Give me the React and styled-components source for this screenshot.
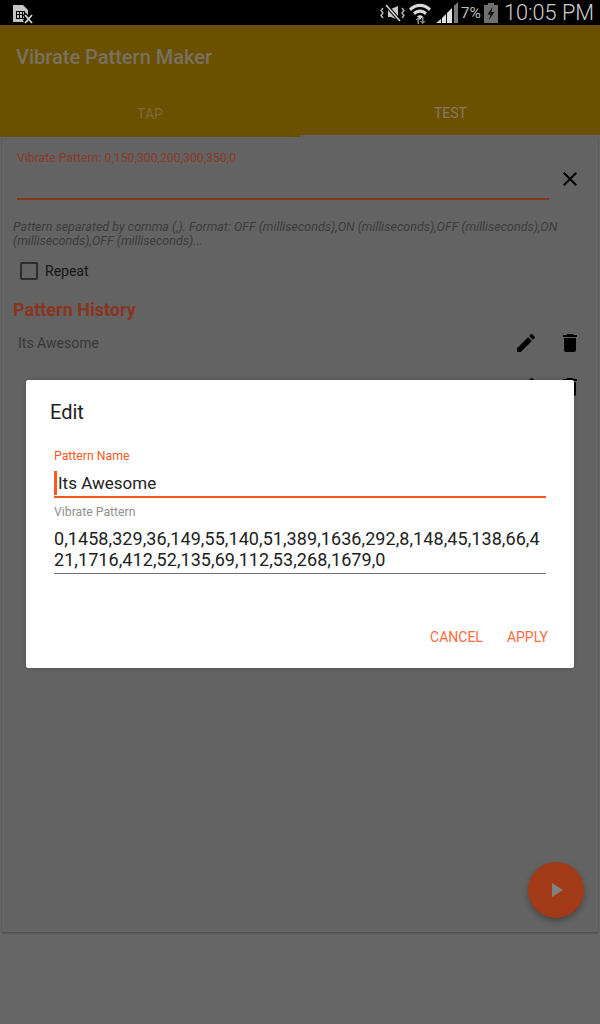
import React from "react";
import styled, { createGlobalStyle } from "styled-components";
import { MdEdit, MdDelete, MdClose, MdPlayArrow } from "react-icons/md";

const Global = createGlobalStyle`
  html, body { margin: 0; padding: 0; background: #666; }
  * { box-sizing: border-box; }
  body { font-family: Roboto, "Liberation Sans", sans-serif; }
`;

const Page = styled.div`
  position: relative;
  width: 600px;
  height: 1024px;
  overflow: hidden;
  display: flex;
  flex-direction: column;
  background: #666666;
`;

const StatusBar = styled.div`
  height: 25px;
  flex: none;
  background: #000;
  display: flex;
  align-items: center;
  color: #c4c4c4;
  padding: 0 6px 0 13px;
`;
const StatusLeft = styled.div`
  flex: 1;
  display: flex;
  align-items: center;
`;
const Percent = styled.span`
  font-size: 15.5px;
  margin: 0 3px 0 3px;
  color: #bdbdbd;
`;
const Clock = styled.span`
  font-size: 21.7px;
  font-weight: 300;
  margin-left: 6px;
  color: #cfcfcf;
  white-space: nowrap;
`;
const StatusIcon = styled.svg`
  display: block;
  flex: none;
  margin-right: ${(p) => p.$gap || 0}px;
`;

const AppBar = styled.header`
  height: 112px;
  flex: none;
  background: #6b5000;
  display: flex;
  flex-direction: column;
`;
const Title = styled.div`
  height: 64px;
  padding: 0 16px;
  display: flex;
  align-items: center;
  font-size: 20px;
  font-weight: 500;
  color: #78715f;
`;
const Tabs = styled.div`
  height: 48px;
  display: flex;
`;
const Tab = styled.div`
  flex: 1;
  display: flex;
  align-items: center;
  justify-content: center;
  font-size: 14px;
  color: ${(p) => (p.$active ? "#7d6a3a" : "#857c62")};
  height: ${(p) => (p.$active ? 48 : 46)}px;
  padding-top: 2px;
  padding-left: ${(p) => (p.$active ? 0 : 1)}px;
  background: #6b5000;
`;
const TabSlot = styled.div`
  flex: 1;
  display: flex;
  background: #646464;
  align-items: flex-start;
`;

const Card = styled.main`
  position: relative;
  margin: 0 2px;
  height: 795px;
  flex: none;
  background: #636363;
  box-shadow: 0 1px 2px rgba(0, 0, 0, 0.3);
  padding: 14px 11px 0;
  display: flex;
  flex-direction: column;
`;
const PatternLabel = styled.div`
  font-size: 12.25px;
  line-height: 14px;
  color: #8a3a28;
  margin-left: 4px;
`;
const InputRow = styled.div`
  display: flex;
  align-items: flex-start;
  height: 41px;
  margin: 0 0 0 4px;
`;
const PatternInput = styled.div`
  flex: none;
  width: 532px;
  height: 35px;
  border-bottom: 2px solid #86341a;
`;
const IconBtn = styled.span`
  width: 44px;
  height: 24px;
  display: flex;
  align-items: center;
  justify-content: center;
  color: #000;
  font-size: 24px;
  flex: none;
`;
const CloseBtn = styled(IconBtn)`
  width: 42px;
  margin-top: 2px;
`;
const Hint = styled.div`
  margin: 0 -8px 0 0;
  padding-top: 14px;
  font-size: 12.5px;
  line-height: 14px;
  font-style: italic;
  color: #3c3c3c;
`;
const RepeatRow = styled.label`
  display: flex;
  align-items: center;
  margin: 13px 0 0 7px;
  height: 20px;
  font-size: 14px;
  color: #141414;
`;
const Check = styled.span`
  width: 18px;
  height: 18px;
  border: 2px solid #2c2c2c;
  border-radius: 2px;
  margin-right: 7px;
  flex: none;
`;
const Heading = styled.h2`
  margin: 18px 0 0;
  font-size: 18px;
  line-height: 22px;
  font-weight: 700;
  color: #8a3420;
`;
const HistoryList = styled.div`
  display: flex;
  flex-direction: column;
`;
const HistoryRow = styled.div`
  height: 44px;
  display: flex;
  align-items: center;
  padding-left: 5px;
  font-size: 14px;
  color: #383838;
`;
const RowName = styled.span`
  flex: 1;
`;
const RowEnd = styled.div`
  display: flex;
  margin-right: -5px;
`;

const Fab = styled.div`
  position: absolute;
  left: 526px;
  top: 725px;
  width: 56px;
  height: 56px;
  border-radius: 50%;
  background: #a23a17;
  box-shadow: 0 3px 6px rgba(0, 0, 0, 0.3);
  color: #80807e;
  display: flex;
  align-items: center;
  justify-content: center;
  font-size: 24px;
`;

const Dialog = styled.section`
  position: absolute;
  left: 26px;
  top: 380px;
  width: 548px;
  height: 288px;
  background: #fff;
  border-radius: 2px;
  box-shadow: 0 0 4px rgba(0, 0, 0, 0.2);
  display: flex;
  flex-direction: column;
  padding: 20px 28px 0;
`;
const DialogTitle = styled.div`
  font-size: 20px;
  line-height: 24px;
  margin-left: -4px;
  color: #212121;
`;
const FieldLabel = styled.div`
  font-size: 12.25px;
  line-height: 14px;
  color: ${(p) => (p.$focus ? "#ff5722" : "#8f8f8f")};
  margin-top: ${(p) => p.$top}px;
`;
const FieldValue = styled.div`
  font-size: ${(p) => p.$size}px;
  line-height: 21px;
  letter-spacing: ${(p) => p.$spacing || 0}px;
  color: #212121;
  word-break: break-all;
  border-bottom: ${(p) => (p.$focus ? "2px solid #ff5722" : "1px solid #757575")};
  padding-top: ${(p) => p.$padTop}px;
  padding-bottom: ${(p) => p.$padBottom}px;
`;
const Caret = styled.span`
  display: inline-block;
  width: 3px;
  height: 24px;
  background: #ff5722;
  vertical-align: -6px;
  margin-right: 1px;
`;
const Actions = styled.div`
  display: flex;
  justify-content: flex-end;
  gap: 24px;
  margin: 55px -2px 0 0;
`;
const Action = styled.span`
  font-size: 14px;
  line-height: 16px;
  color: #ff6a3d;
`;

const SimIcon = () => (
  <StatusIcon width="21" height="20" viewBox="0 0 21 20" style={{ marginTop: 3 }}>
    <path d="M0 1h10l5 5v12H0z" fill="#c4c4c4" />
    <path d="M3 7h9v8H3z" fill="#000" />
    <path d="M4 8h2v2H4zM7 8h2v2H7zM10 8h1v6h-1zM4 11h2v3H4zM7 11h2v3H7z" fill="#c4c4c4" />
    <path d="M11 10l8 8M19 10l-8 8" stroke="#000" strokeWidth="4" />
    <path d="M12 11l7 8M19 11l-7 8" stroke="#d4d4d4" strokeWidth="1.8" />
  </StatusIcon>
);
const MuteIcon = () => (
  <StatusIcon $gap={4} width="25" height="20" viewBox="0 0 25 20">
    <path d="M8 6h3l7 -3v14l-7 -3H8z" fill="#c9c9c9" />
    <path d="M6 2l14 16" stroke="#000" strokeWidth="3.5" />
    <path d="M6 2l14 16" stroke="#d0d0d0" strokeWidth="1.6" />
    <path d="M3 5l-2 2.5 2 2.5-2 2.5 2 2.5M22 5l2 2.5-2 2.5 2 2.5-2 2.5" fill="none" stroke="#b5b5b5" strokeWidth="1.4" />
  </StatusIcon>
);
const WifiIcon = () => (
  <StatusIcon $gap={5} width="22" height="22" viewBox="0 0 22 22">
    <path d="M0 6.5C6 0 16 0 22 6.5L20 9C15 3.5 7 3.5 2 9z" fill="#d8d8d8" />
    <path d="M4 10.5C8 6.5 14 6.5 18 10.5L16 13C13 10 9 10 6 13z" fill="#d8d8d8" />
    <path d="M8 14.5c2-1.7 4-1.7 6 0l-3 3z" fill="#d8d8d8" />
    <path d="M8.5 22v-4H6.5l2.8-3 2.6 3H10v4z" fill="#8a8a8a" />
    <path d="M13 15v4h-2l2.8 3 2.7-3h-2v-4z" fill="#8a8a8a" />
  </StatusIcon>
);
const SignalIcon = () => (
  <StatusIcon width="22" height="21" viewBox="0 0 22 21">
    <path d="M0 21l5-4v4z" fill="#d8d8d8" />
    <path d="M6 16l4-4v9H6z" fill="#e0e0e0" />
    <path d="M11 11l5-5v15h-5z" fill="#e0e0e0" />
    <path d="M18 4l4-4v21h-4z" fill="#7a7a7a" />
  </StatusIcon>
);
const BatteryIcon = () => (
  <StatusIcon width="14" height="20" viewBox="0 0 14 20">
    <path d="M4 0h6v2h4v18H0V2h4z" fill="#6f6f6f" />
    <path d="M8.5 4L3.5 11.5H6.5L5 17l5.5-8H7.5z" fill="#111" />
  </StatusIcon>
);

const RowActions = () => (
  <RowEnd>
    <IconBtn>
      <MdEdit />
    </IconBtn>
    <IconBtn>
      <MdDelete />
    </IconBtn>
  </RowEnd>
);

export default function App() {
  return (
    <Page>
      <Global />
      <StatusBar>
        <StatusLeft>
          <SimIcon />
        </StatusLeft>
        <MuteIcon />
        <WifiIcon />
        <SignalIcon />
        <Percent>7%</Percent>
        <BatteryIcon />
        <Clock>10:05 PM</Clock>
      </StatusBar>
      <AppBar>
        <Title>Vibrate Pattern Maker</Title>
        <Tabs>
          <Tab $active>TAP</Tab>
          <TabSlot>
            <Tab>TEST</Tab>
          </TabSlot>
        </Tabs>
      </AppBar>
      <Card>
        <PatternLabel>Vibrate Pattern: 0,150,300,200,300,350,0</PatternLabel>
        <InputRow>
          <PatternInput />
          <CloseBtn>
            <MdClose />
          </CloseBtn>
        </InputRow>
        <Hint>
          Pattern separated by comma (,). Format: OFF (milliseconds),ON (milliseconds),OFF (milliseconds),ON
          (milliseconds),OFF (milliseconds)...
        </Hint>
        <RepeatRow>
          <Check />
          Repeat
        </RepeatRow>
        <Heading>Pattern History</Heading>
        <HistoryList>
          <HistoryRow>
            <RowName>Its Awesome</RowName>
            <RowActions />
          </HistoryRow>
          <HistoryRow>
            <RowName />
            <RowActions />
          </HistoryRow>
        </HistoryList>
        <Fab>
          <MdPlayArrow />
        </Fab>
      </Card>
      <Dialog>
        <DialogTitle>Edit</DialogTitle>
        <FieldLabel $focus $top={25}>
          Pattern Name
        </FieldLabel>
        <FieldValue $focus $size={17} $padTop={8} $padBottom={1}>
          <Caret />
          Its Awesome
        </FieldValue>
        <FieldLabel $top={7}>Vibrate Pattern</FieldLabel>
        <FieldValue $size={18} $spacing={0.07} $padTop={9} $padBottom={3}>
          0,1458,329,36,149,55,140,51,389,1636,292,8,148,45,138,66,421,1716,412,52,135,69,112,53,268,1679,0
        </FieldValue>
        <Actions>
          <Action>CANCEL</Action>
          <Action>APPLY</Action>
        </Actions>
      </Dialog>
    </Page>
  );
}
